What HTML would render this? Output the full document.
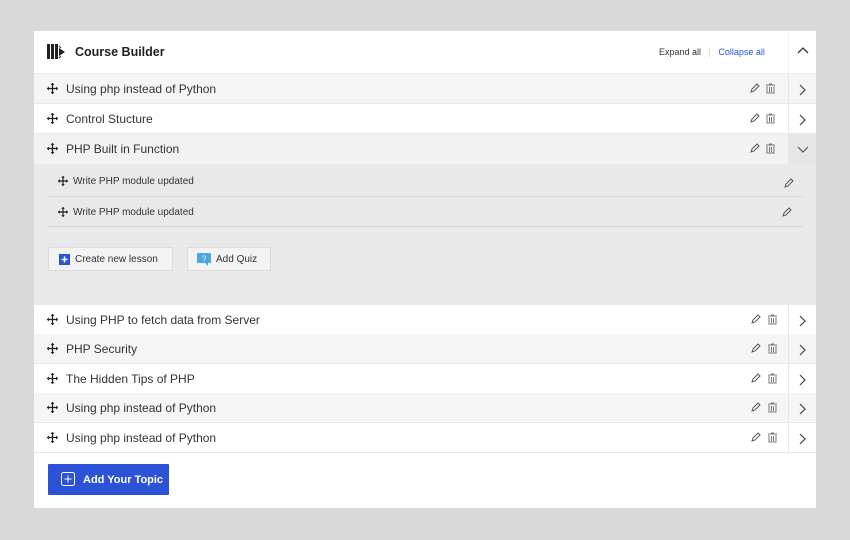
<!DOCTYPE html>
<html><head><style>
*{box-sizing:border-box;margin:0;padding:0}
body{width:850px;height:540px;background:#d9d9d9;font-family:"Liberation Sans",sans-serif;position:relative;overflow:hidden}
.card{position:absolute;left:34px;top:31px;width:782px;height:477px;background:#fff}
.hdr{position:absolute;left:0;top:0;width:782px;height:43px;border-bottom:1px solid #ececec}
.title{position:absolute;left:41px;top:14px;font-size:12.5px;color:#222;font-weight:bold}
.links{position:absolute;left:625px;top:16px;font-size:9px;color:#333}
.links span.b{color:#2255dd}
.row{position:absolute;left:0;width:782px;height:30px;border-bottom:1px solid #e8e8e8}
.row .t{position:absolute;left:32px;top:8px;font-size:12px;color:#333}
.mv{position:absolute;left:13px;top:9px}
.ic{position:absolute;top:9px}
.chev{position:absolute;right:0;top:0;width:28px;height:100%;border-left:1px solid #e6e6e6}
.chev svg{position:absolute;left:9px;top:10px}
.panel{position:absolute;left:0;top:133px;width:782px;height:141px;background:#e9e9e9}
.sub{position:absolute;left:13px;width:756px;height:30px;border-bottom:1px solid #d4d4d4}
.sub .t{position:absolute;left:26px;top:12px;font-size:10px;color:#333}
.btn{position:absolute;top:216px;height:24px;background:#f3f3f3;border:1px solid #dcdcdc;font-size:10px;color:#333}
.add{position:absolute;left:14px;top:433px;width:121px;height:31px;background:#2c52d8;color:#fff;font-size:11px;font-weight:bold;border-radius:1px}
</style></head><body>
<div class="card">
<div class="hdr">
<svg style="position:absolute;left:13px;top:12px" width="20" height="18" viewBox="0 0 20 18"><rect x="0" y="1" width="3" height="15" fill="#222"/><rect x="4" y="1" width="3" height="15" fill="#222"/><rect x="8" y="1" width="3" height="15" fill="#222"/><path d="M12 5l6 4-6 4z" fill="#222"/><path d="M12 3l2 2M12 15l2-2" stroke="#222"/></svg>
<div class="title">Course Builder</div>
<div class="links">Expand all &nbsp;&nbsp;<span style="color:#ccc">|</span>&nbsp;&nbsp; <span class="b">Collapse all</span></div>
<div class="chev" style="height:42px;border-left:1px solid #f2f2f2"><svg style="left:8px;top:15px" width="12" height="8"><path d="M1 7l5-5 5 5" stroke="#333" fill="none" stroke-width="1.3"/></svg></div>
</div>

<div class="row" style="top:43px;background:#f5f5f5"><svg class="mv" width="11" height="11" viewBox="0 0 11 11"><path d="M5.5 0v11M0 5.5h11" stroke="#222" stroke-width="1.3"/><path d="M5.5 0l-2 2h4zM5.5 11l-2-2h4zM0 5.5l2-2v4zM11 5.5l-2-2v4z" fill="#222"/></svg><div class="t">Using php instead of Python</div>
<svg class="ic" style="left:715px" width="11" height="11"><path d="M2 9l1-3 5-5 2 2-5 5z" stroke="#555" fill="none"/></svg><svg class="ic" style="left:731px" width="11" height="11"><path d="M1 2h9M4 1h3M2 3v7h7V3M4.5 4v5M6.5 4v5" stroke="#777" fill="none"/></svg>
<div class="chev"><svg width="8" height="12"><path d="M2 1l5 5-5 5" stroke="#444" fill="none" stroke-width="1.2"/></svg></div></div>

<div class="row" style="top:73px;background:#fff"><svg class="mv" width="11" height="11" viewBox="0 0 11 11"><path d="M5.5 0v11M0 5.5h11" stroke="#222" stroke-width="1.3"/><path d="M5.5 0l-2 2h4zM5.5 11l-2-2h4zM0 5.5l2-2v4zM11 5.5l-2-2v4z" fill="#222"/></svg><div class="t">Control Stucture</div>
<svg class="ic" style="left:715px" width="11" height="11"><path d="M2 9l1-3 5-5 2 2-5 5z" stroke="#555" fill="none"/></svg><svg class="ic" style="left:731px" width="11" height="11"><path d="M1 2h9M4 1h3M2 3v7h7V3M4.5 4v5M6.5 4v5" stroke="#777" fill="none"/></svg>
<div class="chev"><svg width="8" height="12"><path d="M2 1l5 5-5 5" stroke="#444" fill="none" stroke-width="1.2"/></svg></div></div>

<div class="row" style="top:103px;background:#f2f2f2;border-bottom:none"><svg class="mv" width="11" height="11" viewBox="0 0 11 11"><path d="M5.5 0v11M0 5.5h11" stroke="#222" stroke-width="1.3"/><path d="M5.5 0l-2 2h4zM5.5 11l-2-2h4zM0 5.5l2-2v4zM11 5.5l-2-2v4z" fill="#222"/></svg><div class="t">PHP Built in Function</div>
<svg class="ic" style="left:715px" width="11" height="11"><path d="M2 9l1-3 5-5 2 2-5 5z" stroke="#555" fill="none"/></svg><svg class="ic" style="left:731px" width="11" height="11"><path d="M1 2h9M4 1h3M2 3v7h7V3M4.5 4v5M6.5 4v5" stroke="#777" fill="none"/></svg>
<div class="chev" style="background:#e6e6e6"><svg style="left:8px;top:12px" width="12" height="8"><path d="M1 1l5 5 5-5" stroke="#555" fill="none" stroke-width="1.2"/></svg></div></div>

<div class="panel">
<div class="sub" style="top:0;height:33px"><svg class="mv" style="left:11px;top:12px" width="10" height="10" viewBox="0 0 11 11"><path d="M5.5 0v11M0 5.5h11" stroke="#222" stroke-width="1.3"/><path d="M5.5 0l-2 2h4zM5.5 11l-2-2h4zM0 5.5l2-2v4zM11 5.5l-2-2v4z" fill="#222"/></svg><div class="t">Write PHP module updated</div><svg class="ic" style="left:736px;top:14px" width="11" height="11"><path d="M2 9l1-3 5-5 2 2-5 5z" stroke="#555" fill="none"/></svg></div>
<div class="sub" style="top:33px"><svg class="mv" style="left:11px;top:10px" width="10" height="10" viewBox="0 0 11 11"><path d="M5.5 0v11M0 5.5h11" stroke="#222" stroke-width="1.3"/><path d="M5.5 0l-2 2h4zM5.5 11l-2-2h4zM0 5.5l2-2v4zM11 5.5l-2-2v4z" fill="#222"/></svg><div class="t" style="top:10px">Write PHP module updated</div><svg class="ic" style="left:734px;top:10px" width="11" height="11"><path d="M2 9l1-3 5-5 2 2-5 5z" stroke="#555" fill="none"/></svg></div>
</div>
<div class="btn" style="left:14px;top:216px;width:125px"><svg style="position:absolute;left:10px;top:6px" width="11" height="11"><rect width="11" height="11" fill="#2c52d8"/><path d="M5.5 2.5v6M2.5 5.5h6" stroke="#fff" stroke-width="1.5"/></svg><span style="position:absolute;left:26px;top:6px">Create new lesson</span></div>
<div class="btn" style="left:153px;top:216px;width:84px"><svg style="position:absolute;left:9px;top:5px" width="14" height="13"><rect width="14" height="10" fill="#4aa8e0"/><path d="M8 10l3 3v-3z" fill="#4aa8e0"/><text x="5" y="8.5" font-size="8" fill="#fff" font-family="Liberation Sans">?</text></svg><span style="position:absolute;left:28px;top:6px">Add Quiz</span></div>

<div class="row" style="top:274px;background:#fff"><svg class="mv" width="11" height="11" viewBox="0 0 11 11"><path d="M5.5 0v11M0 5.5h11" stroke="#222" stroke-width="1.3"/><path d="M5.5 0l-2 2h4zM5.5 11l-2-2h4zM0 5.5l2-2v4zM11 5.5l-2-2v4z" fill="#222"/></svg><div class="t">Using PHP to fetch data from Server</div>
<svg class="ic" style="left:716px" width="11" height="11"><path d="M2 9l1-3 5-5 2 2-5 5z" stroke="#555" fill="none"/></svg><svg class="ic" style="left:733px" width="11" height="11"><path d="M1 2h9M4 1h3M2 3v7h7V3M4.5 4v5M6.5 4v5" stroke="#777" fill="none"/></svg>
<div class="chev"><svg width="8" height="12"><path d="M2 1l5 5-5 5" stroke="#444" fill="none" stroke-width="1.2"/></svg></div></div>

<div class="row" style="top:303px;background:#f5f5f5"><svg class="mv" width="11" height="11" viewBox="0 0 11 11"><path d="M5.5 0v11M0 5.5h11" stroke="#222" stroke-width="1.3"/><path d="M5.5 0l-2 2h4zM5.5 11l-2-2h4zM0 5.5l2-2v4zM11 5.5l-2-2v4z" fill="#222"/></svg><div class="t">PHP Security</div>
<svg class="ic" style="left:716px" width="11" height="11"><path d="M2 9l1-3 5-5 2 2-5 5z" stroke="#555" fill="none"/></svg><svg class="ic" style="left:733px" width="11" height="11"><path d="M1 2h9M4 1h3M2 3v7h7V3M4.5 4v5M6.5 4v5" stroke="#777" fill="none"/></svg>
<div class="chev"><svg width="8" height="12"><path d="M2 1l5 5-5 5" stroke="#444" fill="none" stroke-width="1.2"/></svg></div></div>

<div class="row" style="top:333px;background:#fff"><svg class="mv" width="11" height="11" viewBox="0 0 11 11"><path d="M5.5 0v11M0 5.5h11" stroke="#222" stroke-width="1.3"/><path d="M5.5 0l-2 2h4zM5.5 11l-2-2h4zM0 5.5l2-2v4zM11 5.5l-2-2v4z" fill="#222"/></svg><div class="t">The Hidden Tips of PHP</div>
<svg class="ic" style="left:716px" width="11" height="11"><path d="M2 9l1-3 5-5 2 2-5 5z" stroke="#555" fill="none"/></svg><svg class="ic" style="left:733px" width="11" height="11"><path d="M1 2h9M4 1h3M2 3v7h7V3M4.5 4v5M6.5 4v5" stroke="#777" fill="none"/></svg>
<div class="chev"><svg width="8" height="12"><path d="M2 1l5 5-5 5" stroke="#444" fill="none" stroke-width="1.2"/></svg></div></div>

<div class="row" style="top:362px;background:#f5f5f5"><svg class="mv" width="11" height="11" viewBox="0 0 11 11"><path d="M5.5 0v11M0 5.5h11" stroke="#222" stroke-width="1.3"/><path d="M5.5 0l-2 2h4zM5.5 11l-2-2h4zM0 5.5l2-2v4zM11 5.5l-2-2v4z" fill="#222"/></svg><div class="t">Using php instead of Python</div>
<svg class="ic" style="left:716px" width="11" height="11"><path d="M2 9l1-3 5-5 2 2-5 5z" stroke="#555" fill="none"/></svg><svg class="ic" style="left:733px" width="11" height="11"><path d="M1 2h9M4 1h3M2 3v7h7V3M4.5 4v5M6.5 4v5" stroke="#777" fill="none"/></svg>
<div class="chev"><svg width="8" height="12"><path d="M2 1l5 5-5 5" stroke="#444" fill="none" stroke-width="1.2"/></svg></div></div>

<div class="row" style="top:392px;background:#fff"><svg class="mv" width="11" height="11" viewBox="0 0 11 11"><path d="M5.5 0v11M0 5.5h11" stroke="#222" stroke-width="1.3"/><path d="M5.5 0l-2 2h4zM5.5 11l-2-2h4zM0 5.5l2-2v4zM11 5.5l-2-2v4z" fill="#222"/></svg><div class="t">Using php instead of Python</div>
<svg class="ic" style="left:716px" width="11" height="11"><path d="M2 9l1-3 5-5 2 2-5 5z" stroke="#555" fill="none"/></svg><svg class="ic" style="left:733px" width="11" height="11"><path d="M1 2h9M4 1h3M2 3v7h7V3M4.5 4v5M6.5 4v5" stroke="#777" fill="none"/></svg>
<div class="chev"><svg width="8" height="12"><path d="M2 1l5 5-5 5" stroke="#444" fill="none" stroke-width="1.2"/></svg></div></div>

<div class="add"><svg style="position:absolute;left:13px;top:8px" width="14" height="14"><rect x="0.5" y="0.5" width="13" height="13" rx="2" stroke="#fff" fill="none"/><path d="M7 3.5v7M3.5 7h7" stroke="#fff"/></svg><span style="position:absolute;left:35px;top:10px">Add Your Topic</span></div>
</div>
</body></html>
